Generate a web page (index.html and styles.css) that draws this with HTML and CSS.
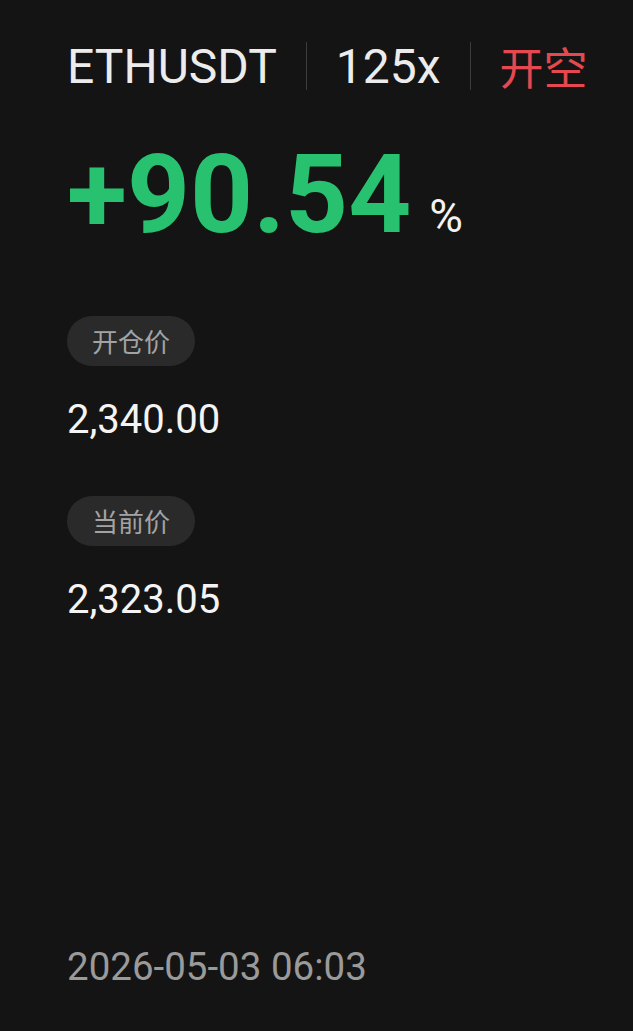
FILE: index.html
```html
<!DOCTYPE html>
<html lang="zh">
<head>
    <meta charset="UTF-8">
    <meta name="viewport" content="width=device-width, initial-scale=1.0">
    <title>ETHUSDT</title>
    <link rel="stylesheet" href="styles.css">
</head>
<body>
    <div class="card">
        <!-- 头部 -->
        <div class="header">
            <span class="symbol">ETHUSDT</span>
            <span class="sep"></span>
            <span class="lever">125x</span>
            <span class="sep"></span>
            <span class="side">开空</span>
        </div>

        <div class="pnl">
            <span class="pnl-value">+90.54</span>
            <span class="pnl-unit">%</span>
        </div>

        <div class="field field-open">
            <span class="tag">开仓价</span>
            <div class="price">2,340.00</div>
        </div>

        <div class="field field-mark">
            <span class="tag">当前价</span>
            <div class="price">2,323.05</div>
        </div>

        <div class="time">2026-05-03 06:03</div>
    </div>
</body>
</html>
```

FILE: styles.css
```css
html, body {
    margin: 0;
    padding: 0;
    background: #141414;
}
body {
    font-family: Roboto, "Noto Sans CJK SC", sans-serif;
    color: #f2f2f2;
    height: 1031px;
    overflow: hidden;
}
.card {
    padding: 34px 0 0 67px;
    height: 1031px;
    display: flex;
    flex-direction: column;
    box-sizing: border-box;
}
.header {
    display: flex;
    align-items: center;
    height: 64px;
    font-size: 48px;
}
.symbol {
    color: #ececec;
}
.sep {
    width: 1px;
    height: 48px;
    background: #3c3c3c;
    margin: 0 29px;
}
.lever {
    color: #ececec;
}
.side {
    color: #e5484e;
    font-size: 44px;
    font-family: "Noto Sans CJK SC", sans-serif;
}
.pnl {
    display: flex;
    align-items: baseline;
    margin-top: 41px;
    height: 112px;
}
.pnl-value {
    font-size: 110px;
    font-weight: 700;
    color: #27c16f;
    line-height: 112px;
}
.pnl-unit {
    font-size: 46px;
    color: #f2f2f2;
    margin-left: 18px;
}
.field {
    display: flex;
    flex-direction: column;
    align-items: flex-start;
}
.field-open {
    margin-top: 65px;
}
.field-mark {
    margin-top: 52px;
}
.tag {
    background: #2a2a2a;
    color: #a3a3a3;
    font-size: 26px;
    font-family: "Noto Sans CJK SC", sans-serif;
    height: 50px;
    line-height: 50px;
    padding: 0 25px;
    border-radius: 25px;
}
.price {
    font-size: 40px;
    color: #f4f4f4;
    margin-top: 30px;
    line-height: 48px;
}
.time {
    margin-top: auto;
    margin-bottom: 42px;
    font-size: 38.5px;
    color: #9a9a9a;
}
```
